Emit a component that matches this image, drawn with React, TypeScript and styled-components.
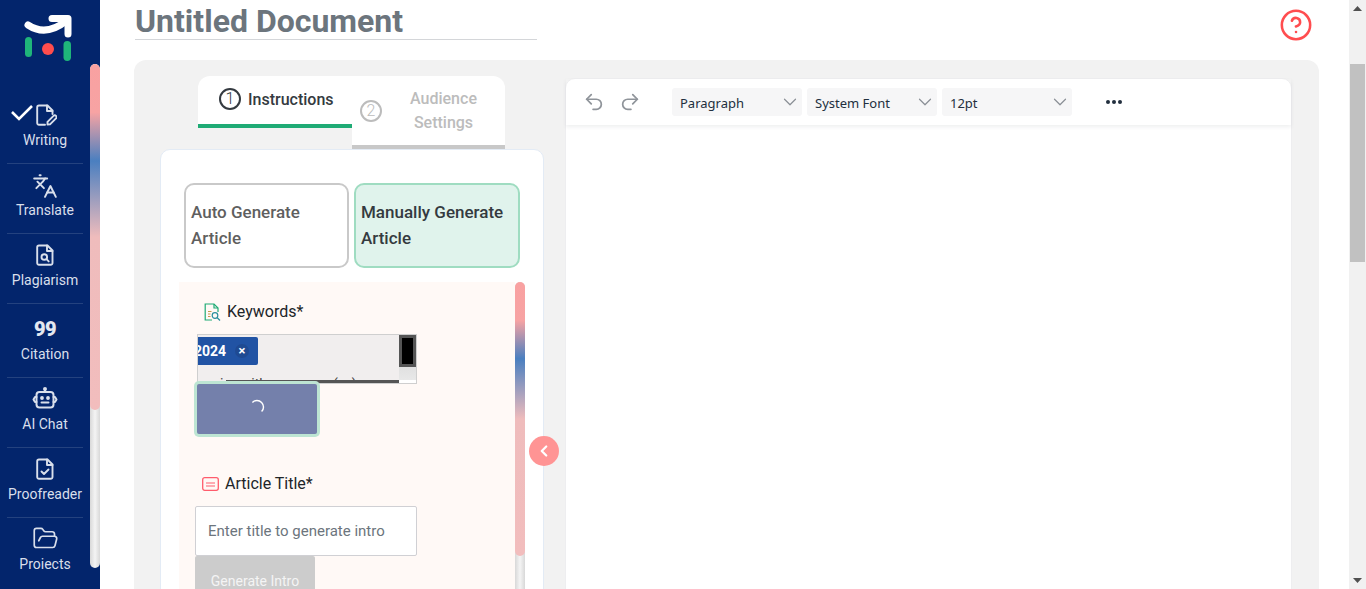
import React from "react";
import styled, { createGlobalStyle } from "styled-components";
import { ChevronDown, ChevronLeft, CircleHelp, FolderOpen, Languages, Redo2, Undo2 } from "lucide-react";

const Global = createGlobalStyle`
  html, body { margin: 0; padding: 0; height: 100%; overflow: hidden; background: #fff; }
  body { font-family: Roboto, "Liberation Sans", sans-serif; }
  * { box-sizing: border-box; }
`;

const thumbGradient = `linear-gradient(180deg, #f9a1a1 0%, #f7a3a3 14%, #4a7fc0 28%, #efbcbc 50%, #f2bdbd 100%)`;

const Page = styled.div`
  display: flex;
  width: 1366px;
  height: 589px;
  overflow: hidden;
`;

const Sidebar = styled.aside`
  width: 100px;
  flex: none;
  height: 589px;
  background: #03256c;
  display: flex;
`;

const SideContent = styled.div`
  width: 90px;
  display: flex;
  flex-direction: column;
  align-items: center;
`;

const LogoWrap = styled.div`
  width: 90px;
  height: 94px;
  flex: none;
`;

const NavItem = styled.div<{ $h: number; $last?: boolean }>`
  position: relative;
  width: 76px;
  height: ${(p) => p.$h}px;
  flex: none;
  display: flex;
  flex-direction: column;
  align-items: center;
  justify-content: flex-end;
  padding-bottom: 14px;
  gap: 4px;
  color: #d9dfeb;
  font-size: 14px;
  line-height: 18px;
  white-space: nowrap;
  border-bottom: ${(p) => (p.$last ? "none" : "1px solid #24427f")};
`;

const NavIcon = styled.span<{ $drop?: number }>`
  display: flex;
  color: #d9dfeb;
  margin-bottom: ${(p) => -(p.$drop ?? 0)}px;
`;

const NavCheck = styled.svg`
  position: absolute;
  left: 3px;
  top: 10px;
`;

const Quote = styled.span`
  font-size: 20px;
  font-weight: 900;
  line-height: 20px;
  color: #e3e7f0;
  letter-spacing: -0.5px;
`;

const SideTrack = styled.div`
  width: 10px;
  height: 504px;
  margin-top: 64px;
  border-radius: 5px;
  background: linear-gradient(90deg, #d8d8d8, #f4f4f4 50%, #d8d8d8);
  overflow: hidden;
`;

const SideThumb = styled.div`
  height: 346px;
  border-radius: 5px;
  background: ${thumbGradient};
`;

const Main = styled.main`
  flex: 1;
  min-width: 0;
  height: 589px;
  display: flex;
  flex-direction: column;
  overflow: hidden;
`;

const TitleRow = styled.header`
  height: 60px;
  flex: none;
  display: flex;
  align-items: flex-start;
  justify-content: space-between;
  padding: 0 36px 0 35px;
`;

const Title = styled.h1`
  width: 402px;
  height: 40px;
  margin: 0;
  font-size: 32px;
  line-height: 42px;
  font-weight: 700;
  color: #6c757d;
  border-bottom: 1px solid #d4d6d9;
`;

const Help = styled.div`
  margin-top: 8px;
  color: #ff4d4f;
  display: flex;
`;

const Panel = styled.section`
  flex: 1;
  width: 1185px;
  margin-left: 34px;
  background: #f2f2f2;
  border-radius: 12px 12px 0 0;
  padding: 16px 27px 0 26px;
  display: flex;
  gap: 21px;
  min-height: 0;
`;

const LeftCol = styled.div`
  width: 384px;
  flex: none;
`;

const Tabs = styled.div`
  display: flex;
  align-items: flex-start;
  margin-left: 38px;
  width: 307px;
  height: 73px;
`;

const TabOne = styled.div`
  width: 154px;
  height: 52px;
  background: #fff;
  border-top-left-radius: 12px;
  border-bottom: 4px solid #1fab75;
  display: flex;
  align-items: center;
  gap: 7px;
  padding: 0 0 2px 21px;
  font-size: 16px;
  font-weight: 500;
  color: #343a40;
`;

const TabTwo = styled.div`
  width: 153px;
  height: 73px;
  background: #fff;
  border-top-right-radius: 12px;
  border-bottom: 4px solid #c8c8c8;
  display: flex;
  align-items: center;
  padding: 0 0 0 8px;
  font-size: 16px;
  font-weight: 500;
  color: #bcbcbc;
`;

const StepNum = styled.span<{ $muted?: boolean }>`
  width: 22px;
  height: 22px;
  flex: none;
  border-radius: 50%;
  border: 2px solid ${(p) => (p.$muted ? "#bcbcbc" : "#343a40")};
  display: flex;
  align-items: center;
  justify-content: center;
  font-size: 16px;
  font-weight: 300;
  line-height: 1;
`;

const TabTwoText = styled.span`
  flex: 1;
  text-align: center;
  line-height: 24px;
`;

const Card = styled.div`
  position: relative;
  height: 460px;
  background: #fff;
  border: 1px solid #e3ebf5;
  border-radius: 10px 10px 0 0;
  padding: 33px 18px 0 18px;
`;

const GenRow = styled.div`
  display: flex;
  gap: 5px;
  padding-left: 5px;
  margin-bottom: 14px;
`;

const GenButton = styled.div<{ $active?: boolean }>`
  width: ${(p) => (p.$active ? 166 : 165)}px;
  height: 85px;
  border-radius: 10px;
  border: 2px solid ${(p) => (p.$active ? "#9fdcc1" : "#c9c9c9")};
  background: ${(p) => (p.$active ? "#e0f3ec" : "#fff")};
  color: ${(p) => (p.$active ? "#343a40" : "#5f5f5f")};
  font-size: 17px;
  font-weight: 500;
  line-height: 26px;
  display: flex;
  align-items: center;
  padding: 0 5px 2px;
`;

const ScrollArea = styled.div`
  display: flex;
  width: 346px;
  height: 320px;
`;

const FormArea = styled.div`
  width: 336px;
  background: #fff9f6;
  padding-top: 19px;
`;

const FieldLabel = styled.div<{ $gap: number; $left: number; $top?: number }>`
  display: flex;
  align-items: center;
  gap: ${(p) => p.$gap}px;
  padding-left: ${(p) => p.$left}px;
  margin-top: ${(p) => p.$top ?? 0}px;
  font-size: 16px;
  line-height: 22px;
  color: #212529;
`;

const KeywordBox = styled.div`
  position: relative;
  width: 220px;
  height: 50px;
  margin: 11px 0 0 18px;
  background: #f1eeee;
  border: 1px solid #cfcfcf;
  overflow: hidden;
  &::after {
    content: "";
    position: absolute;
    right: 0;
    bottom: 0;
    width: 17px;
    height: 3px;
    background: #fff;
  }
`;

const Chip = styled.div`
  width: 60px;
  height: 28px;
  margin-top: 2px;
  background: #2153a4;
  border-radius: 0 2px 2px 0;
  color: #fff;
  font-size: 14px;
  font-weight: 700;
  display: flex;
  align-items: center;
  justify-content: space-between;
  padding-right: 9px;
`;

const ChipText = styled.span`
  margin-left: -4px;
`;

const ChipX = styled.span`
  width: 14px;
  height: 14px;
  border-radius: 50%;
  background: #1f4a92;
  font-size: 13px;
  line-height: 14px;
  text-align: center;
`;

const ClippedLine = styled.div`
  position: absolute;
  left: 22px;
  top: 41px;
  font-size: 14px;
  line-height: 16px;
  color: #444;
  white-space: pre;
`;

const VScroll = styled.div`
  position: absolute;
  right: 0;
  top: 0;
  width: 17px;
  height: 45px;
  background: linear-gradient(180deg, #cfcfcf, #e8e8e8);
`;

const VThumb = styled.div`
  height: 32px;
  background: #000;
  border: 3px solid #555;
`;

const HScroll = styled.div`
  position: absolute;
  left: 28px;
  right: 17px;
  top: 45px;
  height: 3px;
  background: #555;
`;

const LoadButton = styled.div`
  width: 120px;
  height: 50px;
  margin: 0 0 0 18px;
  padding-bottom: 5px;
  background: #7480ab;
  border-radius: 2px;
  box-shadow: 0 0 0 3px #bde5d3;
  display: flex;
  align-items: center;
  justify-content: center;
  position: relative;
`;

const TitleField = styled.div`
  width: 222px;
  height: 50px;
  margin: 11px 0 0 16px;
  padding-left: 12px;
  background: #fff;
  border: 1px solid #d0d0d4;
  border-radius: 2px;
  color: #6c757d;
  font-size: 15px;
  display: flex;
  align-items: center;
`;

const GenIntro = styled.div`
  width: 120px;
  height: 50px;
  margin-left: 16px;
  background: #ccc;
  border-radius: 2px;
  color: #f4f4f4;
  font-size: 14px;
  display: flex;
  align-items: center;
  justify-content: center;
`;

const FormTrack = styled.div`
  width: 10px;
  height: 100%;
  border-radius: 5px;
  background: linear-gradient(90deg, #d8d8d8, #f4f4f4 50%, #d8d8d8);
`;

const FormThumb = styled.div`
  height: 274px;
  border-radius: 5px;
  background: ${thumbGradient};
`;

const Collapse = styled.button`
  position: absolute;
  left: 368px;
  top: 286px;
  width: 30px;
  height: 30px;
  padding: 0;
  border: 0;
  border-radius: 50%;
  background: #ff9494;
  color: #fff;
  display: flex;
  align-items: center;
  justify-content: center;
`;

const Editor = styled.div`
  width: 727px;
  height: 520px;
  margin-top: 2px;
  background: #fff;
  border: 1px solid #eeeef0;
  border-radius: 10px 10px 0 0;
`;

const Toolbar = styled.div`
  height: 46px;
  display: flex;
  align-items: center;
  box-shadow: 0 2px 4px rgba(34, 47, 62, 0.08);
  padding: 0 0 0 17px;
  color: #8f949a;
`;

const UndoGroup = styled.div`
  display: flex;
  gap: 14px;
  width: 89px;
  flex: none;
`;

const SelectBox = styled.div`
  width: 130px;
  height: 28px;
  margin-right: 5px;
  background: #f6f6f7;
  border-radius: 3px;
  padding: 0 1px 0 8px;
  display: flex;
  align-items: center;
  justify-content: space-between;
  color: #222f3e;
  font-family: "Noto Sans", "Open Sans", sans-serif;
  font-size: 13px;
`;

const SelectLabel = styled.span`
  margin-top: 2px;
`;

const MoreDots = styled.svg`
  margin-left: 28px;
`;

const Scrollbar = styled.div`
  width: 17px;
  flex: none;
  height: 589px;
  background: #f1f1f1;
  display: flex;
  flex-direction: column;
  align-items: center;
`;

const ArrowCell = styled.div`
  height: 17px;
  width: 17px;
  flex: none;
  display: flex;
  align-items: center;
  justify-content: center;
`;

const PageThumb = styled.div`
  width: 15px;
  height: 198px;
  flex: none;
  margin-top: 47px;
  margin-bottom: auto;
  background: #c1c1c1;
`;

const DocIcon = ({ children }: { children: React.ReactNode }) => (
  <svg width="24" height="24" viewBox="0 0 24 24" fill="none" stroke="currentColor" strokeWidth="1.9" strokeLinejoin="round" strokeLinecap="round">
    <path d="M6 2.5h8.5l5 5V20a1.8 1.8 0 0 1-1.8 1.8H6A1.8 1.8 0 0 1 4.2 20V4.3A1.8 1.8 0 0 1 6 2.5z" />
    <path d="M14 2.5v5.5h5.5" />
    {children}
  </svg>
);

const WriteIcon = () => (
  <svg width="24" height="24" viewBox="0 0 24 24" fill="none" stroke="currentColor" strokeWidth="1.9" strokeLinejoin="round" strokeLinecap="round">
    <path d="M12 21.8H6A1.8 1.8 0 0 1 4.2 20V4.3A1.8 1.8 0 0 1 6 2.5h8.5l5 5V11" />
    <path d="M14 2.5v5.5h5.5" />
    <path d="M14.5 21.5v-2.6l6-6a1.7 1.7 0 0 1 2.5 2.5l-6 6z" />
  </svg>
);

const BotIcon = () => (
  <svg width="26" height="24" viewBox="0 0 26 24" fill="none" stroke="currentColor" strokeWidth="2" strokeLinejoin="round" strokeLinecap="round">
    <rect x="4.5" y="5" width="17" height="15.5" rx="3" />
    <path d="M13 5V2.5" />
    <circle cx="13" cy="2" r="1" fill="currentColor" />
    <path d="M4.5 10H3l-1.5 2.5L3 15h1.5M21.5 10H23l1.5 2.5L23 15h-1.5" />
    <circle cx="10" cy="11" r="0.9" fill="currentColor" />
    <circle cx="16" cy="11" r="0.9" fill="currentColor" />
    <path d="M9.5 15.5h7" />
  </svg>
);

const navs: { label: string; h: number; drop?: number; icon: React.ReactNode }[] = [
  { label: "Writing", h: 70, icon: <WriteIcon /> },
  { label: "Translate", h: 70, drop: 2, icon: <Languages size={26} strokeWidth={1.8} /> },
  {
    label: "Plagiarism",
    h: 70,
    icon: (
      <DocIcon>
        <circle cx="11.3" cy="14" r="2.8" />
        <path d="M13.5 16.2l2.2 2.2" />
      </DocIcon>
    ),
  },
  { label: "Citation", h: 74, drop: -2, icon: <Quote>99</Quote> },
  { label: "AI Chat", h: 70, icon: <BotIcon /> },
  {
    label: "Proofreader",
    h: 70,
    icon: (
      <DocIcon>
        <path d="M8.5 14.5l2.5 2.5 4.5-4.5" />
      </DocIcon>
    ),
  },
  { label: "Proiects", h: 69, drop: 1, icon: <FolderOpen size={27} strokeWidth={1.5} /> },
];

const chevron = <ChevronDown size={22} strokeWidth={1.3} color="#8a8f96" />;

export default function App() {
  return (
    <Page>
      <Global />
      <Sidebar>
        <SideContent>
          <LogoWrap>
            <svg width="90" height="94" viewBox="0 0 90 94">
              <path d="M28 25 Q46 37 66 21" fill="none" stroke="#fff" strokeWidth="7" strokeLinecap="round" />
              <path d="M52 18.5 H68 V34" fill="none" stroke="#fff" strokeWidth="7" strokeLinecap="round" strokeLinejoin="round" />
              <rect x="25" y="37" width="7" height="20" rx="3.5" fill="#1fb57a" />
              <rect x="63.5" y="41" width="7.5" height="20" rx="3.7" fill="#1fb57a" />
              <circle cx="48" cy="49" r="6" fill="#ff4d4d" />
            </svg>
          </LogoWrap>
          {navs.map((n, i) => (
            <NavItem key={n.label} $h={n.h} $last={i === navs.length - 1}>
              {i === 0 && (
                <NavCheck width="24" height="18" viewBox="0 0 24 18">
                  <path d="M2 8 L9 15 L22 2" fill="none" stroke="#fff" strokeWidth="2.6" />
                </NavCheck>
              )}
              <NavIcon $drop={n.drop}>{n.icon}</NavIcon>
              <span>{n.label}</span>
            </NavItem>
          ))}
        </SideContent>
        <SideTrack>
          <SideThumb />
        </SideTrack>
      </Sidebar>
      <Main>
        <TitleRow>
          <Title>Untitled Document</Title>
          <Help>
            <CircleHelp size={34} strokeWidth={1.8} />
          </Help>
        </TitleRow>
        <Panel>
          <LeftCol>
            <Tabs>
              <TabOne>
                <StepNum>1</StepNum>
                Instructions
              </TabOne>
              <TabTwo>
                <StepNum $muted>2</StepNum>
                <TabTwoText>
                  Audience
                  <br />
                  Settings
                </TabTwoText>
              </TabTwo>
            </Tabs>
            <Card>
              <GenRow>
                <GenButton>Auto Generate Article</GenButton>
                <GenButton $active>Manually Generate Article</GenButton>
              </GenRow>
              <ScrollArea>
                <FormArea>
                  <FieldLabel $gap={5} $left={25}>
                    <svg width="18" height="18" viewBox="0 0 18 18" fill="none" stroke="#1fab75" strokeWidth="1.2">
                      <path d="M8 17H1.2V1H10l4 4v4" />
                      <path d="M10 1v4h4" />
                      <path d="M4 8.5h3.5M4 11h2.5M4 13.5h2.5" stroke="#c79a4a" />
                      <circle cx="11" cy="12.5" r="2.8" stroke="#2a8f9c" />
                      <path d="M13 14.5l3 3" stroke="#2a8f9c" />
                    </svg>
                    Keywords*
                  </FieldLabel>
                  <KeywordBox>
                    <Chip>
                      <ChipText>2024</ChipText>
                      <ChipX>×</ChipX>
                    </Chip>
                    <ClippedLine>{"i     with                   (    )"}</ClippedLine>
                    <VScroll>
                      <VThumb />
                    </VScroll>
                    <HScroll />
                  </KeywordBox>
                  <LoadButton>
                    <svg width="18" height="18" viewBox="0 0 18 18" fill="none" stroke="#fff" strokeWidth="1.4">
                      <path d="M4.4 4.4 A6.5 6.5 0 0 1 13.6 13.6" />
                    </svg>
                  </LoadButton>
                  <FieldLabel $gap={6} $left={23} $top={39}>
                    <svg width="17" height="14" viewBox="0 0 17 14" fill="none">
                      <rect x="0.7" y="0.7" width="15.6" height="12.6" rx="2" stroke="#ff5c6c" strokeWidth="1.3" />
                      <path d="M4 6h9M4 9h9" stroke="#ff5c6c" strokeWidth="1.2" />
                    </svg>
                    Article Title*
                  </FieldLabel>
                  <TitleField>Enter title to generate intro</TitleField>
                  <GenIntro>Generate Intro</GenIntro>
                </FormArea>
                <FormTrack>
                  <FormThumb />
                </FormTrack>
              </ScrollArea>
              <Collapse aria-label="collapse">
                <ChevronLeft size={18} strokeWidth={3} />
              </Collapse>
            </Card>
          </LeftCol>
          <Editor>
            <Toolbar>
              <UndoGroup>
                <Undo2 size={22} strokeWidth={1.9} />
                <Redo2 size={22} strokeWidth={1.9} />
              </UndoGroup>
              <SelectBox>
                <SelectLabel>Paragraph</SelectLabel>
                {chevron}
              </SelectBox>
              <SelectBox>
                <SelectLabel>System Font</SelectLabel>
                {chevron}
              </SelectBox>
              <SelectBox>
                <SelectLabel>12pt</SelectLabel>
                {chevron}
              </SelectBox>
              <MoreDots width="18" height="6" viewBox="0 0 18 6" fill="#222f3e">
                <circle cx="3" cy="3" r="2" />
                <circle cx="9" cy="3" r="2" />
                <circle cx="15" cy="3" r="2" />
              </MoreDots>
            </Toolbar>
          </Editor>
        </Panel>
      </Main>
      <Scrollbar>
        <ArrowCell>
          <svg width="9" height="5" viewBox="0 0 9 5"><path d="M0 5 L4.5 0 L9 5Z" fill="#505050" /></svg>
        </ArrowCell>
        <PageThumb />
        <ArrowCell>
          <svg width="9" height="5" viewBox="0 0 9 5"><path d="M0 0 L4.5 5 L9 0Z" fill="#505050" /></svg>
        </ArrowCell>
      </Scrollbar>
    </Page>
  );
}
